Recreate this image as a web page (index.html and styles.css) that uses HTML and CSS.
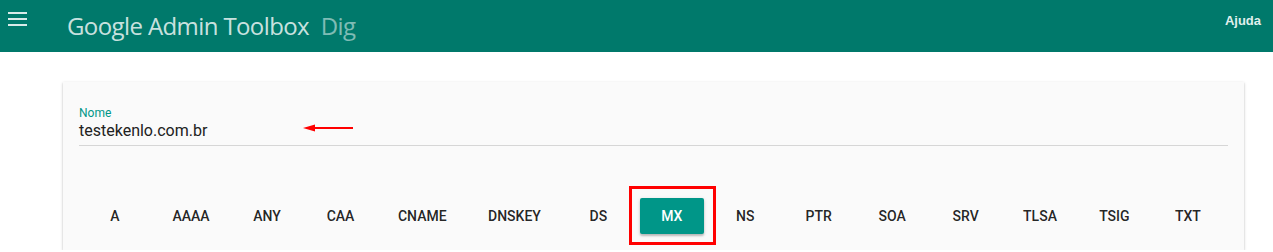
FILE: index.html
```html
<!DOCTYPE html>
<html lang="pt">
<head>
<meta charset="utf-8">
<title>Google Admin Toolbox Dig</title>
<link rel="stylesheet" href="styles.css">
</head>
<body>
<header class="topbar">
  <button class="menu" aria-label="Menu">
    <svg width="20" height="14" viewBox="0 0 20 14"><rect x="0" y="0" width="19" height="2"/><rect x="0" y="6" width="19" height="2"/><rect x="0" y="12" width="19" height="2"/></svg>
  </button>
  <h1 class="title">Google Admin Toolbox <span class="sub">Dig</span></h1>
  <a class="help" href="#">Ajuda</a>
</header>
<main class="main">
  <section class="card">
    <div class="field">
      <label class="label">Nome</label>
      <div class="value">testekenlo.com.br</div>
      <svg class="arrow" width="52" height="8" viewBox="0 0 52 8"><polygon points="0,4 12,0.5 12,7.5" fill="#ff0000"/><rect x="10" y="3" width="40" height="2" fill="#ff0000"/></svg>
    </div>
    <div class="types">
      <button class="btn">A</button>
      <button class="btn">AAAA</button>
      <button class="btn">ANY</button>
      <button class="btn">CAA</button>
      <button class="btn">CNAME</button>
      <button class="btn">DNSKEY</button>
      <button class="btn">DS</button>
      <span class="mark"><button class="btn active">MX</button></span>
      <button class="btn">NS</button>
      <button class="btn">PTR</button>
      <button class="btn">SOA</button>
      <button class="btn">SRV</button>
      <button class="btn">TLSA</button>
      <button class="btn">TSIG</button>
      <button class="btn">TXT</button>
    </div>
  </section>
</main>
</body>
</html>
```
FILE: styles.css
```css
* { box-sizing: border-box; }
html, body { margin: 0; padding: 0; background: #fff; }
body { font-family: Roboto, "Noto Sans", sans-serif; overflow: hidden; }

.topbar {
  height: 52px;
  background: #00796b;
  display: flex;
  align-items: flex-start;
  color: #fff;
}
.menu {
  border: 0; background: none; padding: 0;
  margin: 12px 0 0 8px;
  width: 20px; height: 14px;
  fill: rgba(255,255,255,0.85);
  display: block;
}
.menu svg { display: block; }
.title {
  margin: 10px 0 0 39px;
  font-family: "Open Sans", sans-serif;
  font-weight: 500;
  font-size: 24px;
  letter-spacing: -0.6px;
  line-height: 31px;
  color: rgba(255,255,255,0.8);
}
.sub { color: rgba(255,255,255,0.5); margin-left: 6px; }
.help {
  margin: 13px 12px 0 auto;
  font-family: "Liberation Sans", Arial, sans-serif;
  font-size: 13px;
  font-weight: 700;
  color: rgba(255,255,255,0.9);
  text-decoration: none;
  line-height: 16px;
}

.main { padding: 30px 29px 0 63px; }
.card {
  background: #fafafa;
  box-shadow: 0 1px 3px rgba(0,0,0,0.2), 0 1px 1px rgba(0,0,0,0.14);
  padding: 24px 16px 16px 16px;
  width: 1181px;
}
.field {
  position: relative;
  border-bottom: 1px solid #d6d6d6;
  padding-bottom: 4px;
}
.label {
  display: block;
  font-size: 12px;
  line-height: 14px;
  color: #009688;
}
.value {
  font-size: 16px;
  line-height: 20px;
  color: #212121;
  margin-top: 1px;
}
.arrow { position: absolute; left: 224px; top: 18px; }

.types {
  display: flex;
  justify-content: space-between;
  margin: 52px 8px 0 4px;
}
.btn {
  min-width: 64px;
  height: 36px;
  padding: 0 16px;
  border: 0;
  border-radius: 2px;
  background: transparent;
  font-family: Roboto, sans-serif;
  font-weight: 500;
  font-size: 14px;
  color: rgba(0,0,0,0.87);
  text-transform: uppercase;
  cursor: pointer;
}
.btn.active {
  background: #009688;
  color: #fff;
  box-shadow: 0 2px 2px rgba(0,0,0,0.2), 0 1px 4px rgba(0,0,0,0.12);
}
.mark { position: relative; display: inline-flex; }
.mark::after {
  content: "";
  position: absolute;
  left: -11px; right: -12px; top: -12px; bottom: -11px;
  border: 3px solid #ff0000;
  pointer-events: none;
}
```
